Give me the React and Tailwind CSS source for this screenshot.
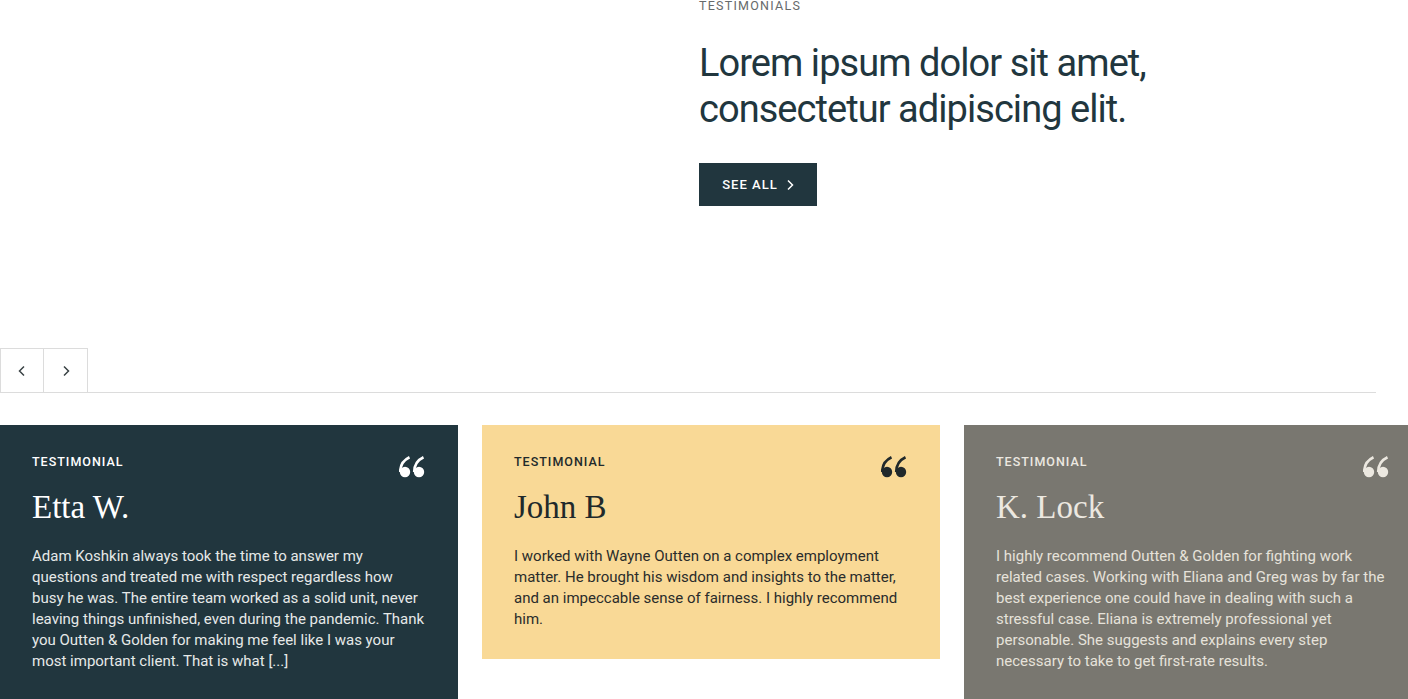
import React from 'react';

const sans = { fontFamily: 'Roboto, Inter, "Noto Sans", sans-serif' };
const serif = { fontFamily: '"Liberation Serif", "DejaVu Serif", serif' };

const testimonials = [
  {
    name: 'Etta W.',
    body: 'Adam Koshkin always took the time to answer my questions and treated me with respect regardless how busy he was. The entire team worked as a solid unit, never leaving things unfinished, even during the pandemic. Thank you Outten & Golden for making me feel like I was your most important client. That is what [...]',
    card: 'bg-[#21363e]',
    label: 'text-white',
    name_: 'text-white',
    text: 'text-[#e6e9e8]',
    quote: '#ffffff',
  },
  {
    name: 'John B',
    body: 'I worked with Wayne Outten on a complex employment matter. He brought his wisdom and insights to the matter, and an impeccable sense of fairness. I highly recommend him.',
    card: 'bg-[#f9d996]',
    label: 'text-[#21292b]',
    name_: 'text-[#21292b]',
    text: 'text-[#2a2c2b]',
    quote: '#21292b',
  },
  {
    name: 'K. Lock',
    body: 'I highly recommend Outten & Golden for fighting work related cases. Working with Eliana and Greg was by far the best experience one could have in dealing with such a stressful case. Eliana is extremely professional yet personable. She suggests and explains every step necessary to take to get first-rate results.',
    card: 'bg-[#797770]',
    label: 'text-[#ece8e0]',
    name_: 'text-[#ece8e0]',
    text: 'text-[#e6e2da]',
    quote: '#ece8e0',
  },
];

function QuoteMark({ color }) {
  return (
    <svg width="27" height="22" viewBox="0 0 27 22" fill={color}>
      <circle cx="6" cy="16" r="5.2" />
      <path d="M1.2 16 C1.2 9 4.5 4 10.5 1.2" stroke={color} strokeWidth="2.6" fill="none" />
      <circle cx="20" cy="16" r="5.2" />
      <path d="M15.2 16 C15.2 9 18.5 4 24.5 1.2" stroke={color} strokeWidth="2.6" fill="none" />
    </svg>
  );
}

function Chevron({ dir = 'right', className = '' }) {
  return (
    <svg width="8" height="12" viewBox="0 0 8 12" className={className} fill="none" stroke="currentColor" strokeWidth="1.5">
      {dir === 'right' ? <path d="M2 1.5 L6.5 6 L2 10.5" /> : <path d="M6 1.5 L1.5 6 L6 10.5" />}
    </svg>
  );
}

function Card({ t }) {
  return (
    <div className={`${t.card} w-[458px] shrink-0 px-8 pt-[28px] pb-[29px]`}>
      <div className="flex justify-between items-start">
        <p className={`${t.label} text-[12.5px] tracking-[0.08em] leading-4 font-medium mt-[1px]`} style={sans}>
          TESTIMONIAL
        </p>
        <div className="mt-[3px]">
          <QuoteMark color={t.quote} />
        </div>
      </div>
      <h3 className={`${t.name_} text-[33px] leading-10 mt-[9px]`} style={serif}>
        {t.name}
      </h3>
      <p className={`${t.text} text-[15px] leading-[21px] mt-[19px]`} style={sans}>
        {t.body}
      </p>
    </div>
  );
}

export default function App() {
  return (
    <div className="w-[1408px] h-[699px] overflow-hidden bg-white" style={sans}>
      <div className="flex">
        <div className="w-[699px] shrink-0" />
        <div className="-mt-[2px]">
          <p className="text-[12.5px] tracking-[0.1em] text-[#666a6b] leading-4">TESTIMONIALS</p>
          <h2 className="text-[#21363e] text-[38px] leading-[46px] tracking-[-0.025em] mt-[26px]">
            Lorem ipsum dolor sit amet,
            <br />
            consectetur adipiscing elit.
          </h2>
          <button className="mt-[31px] bg-[#21363e] text-white h-[43px] w-[118px] flex items-center justify-center gap-2 text-[13px] tracking-[0.08em] font-medium">
            SEE ALL
            <Chevron dir="right" className="mt-[1px]" />
          </button>
        </div>
      </div>

      <div className="mt-[142px] mr-8 border-b border-[#dcdcdc] flex">
        <button className="w-[44px] h-[44px] border-t border-l border-r border-[#dcdcdc] flex items-center justify-center text-[#3a4245]">
          <Chevron dir="left" />
        </button>
        <button className="w-[44px] h-[44px] border-t border-r border-[#dcdcdc] flex items-center justify-center text-[#3a4245]">
          <Chevron dir="right" />
        </button>
      </div>

      <div className="mt-[32px] flex items-start gap-6">
        {testimonials.map((t) => (
          <Card key={t.name} t={t} />
        ))}
      </div>
    </div>
  );
}
